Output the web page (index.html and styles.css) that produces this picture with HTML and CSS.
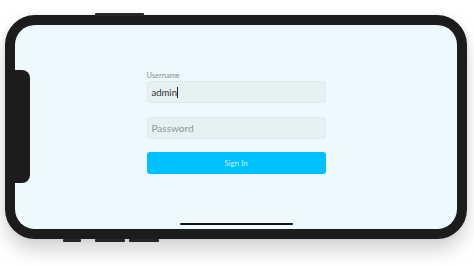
FILE: index.html
```html
<!DOCTYPE html>
<html>
<head>
<meta charset="utf-8">
<link rel="stylesheet" href="styles.css">
</head>
<body>
<div class="stage">
  <div class="phone">
    <span class="btn btn-top"></span>
    <span class="btn btn-b1"></span>
    <span class="btn btn-b2"></span>
    <span class="btn btn-b3"></span>
    <div class="screen">
      <div class="notch"></div>
      <form class="form">
        <label class="label">Username</label>
        <div class="input filled">admin<span class="caret"></span></div>
        <div class="input placeholder">Password</div>
        <div class="signin">Sign In</div>
      </form>
      <div class="home"></div>
    </div>
  </div>
</div>
</body>
</html>
```

FILE: styles.css
```css
* { box-sizing: border-box; }
html, body { margin: 0; padding: 0; background: #ffffff; }
body { width: 474px; height: 265px; overflow: hidden; font-family: Lato, "Open Sans", sans-serif; }
.stage { padding: 15px 0 0 5px; }
.phone {
  position: relative;
  width: 462px;
  height: 224px;
  border: 10px solid #1c1c1c;
  border-radius: 30px;
  background: #1c1c1c;
  box-shadow: 0 12px 18px rgba(0,0,0,0.16), 0 0 6px rgba(0,0,0,0.08);
}
.btn { position: absolute; background: #262626; border-radius: 1px; }
.btn-top { top: -12px; left: 80px; width: 49px; height: 3px; }
.btn-b1 { bottom: -13px; left: 48px; width: 18px; height: 3px; }
.btn-b2 { bottom: -13px; left: 80px; width: 30px; height: 3px; }
.btn-b3 { bottom: -13px; left: 114px; width: 30px; height: 3px; }
.screen {
  position: relative;
  width: 100%;
  height: 100%;
  background: #eef9fe;
  border-radius: 20px;
  display: flex;
  flex-direction: column;
  align-items: center;
  padding-top: 46px;
}
.notch {
  position: absolute;
  left: 0;
  top: 45px;
  width: 15px;
  height: 113px;
  background: #1c1c1c;
  border-radius: 0 8px 8px 0;
}
.form { width: 179px; display: flex; flex-direction: column; }
.label { font-size: 7.5px; color: #7d8f99; line-height: 10px; height: 10px; }
.input {
  height: 22px;
  border-radius: 3px;
  background: #e6f2f1;
  border: 1px solid #dcebea;
  display: flex;
  align-items: center;
  padding-left: 4px;
}
.filled { font-size: 9.5px; color: #2c3438; }
.caret { display: inline-block; width: 1px; height: 11px; background: #222; margin-left: 0.5px; }
.placeholder { margin-top: 14px; font-size: 10px; color: #8398a4; }
.signin {
  margin-top: 13px;
  height: 22px;
  border-radius: 3px;
  background: #00c0fd;
  color: #c9efff;
  font-size: 8px;
  display: flex;
  align-items: center;
  justify-content: center;
}
.home {
  position: absolute;
  left: 165px;
  bottom: 4px;
  width: 113px;
  height: 2.5px;
  border-radius: 2px;
  background: #111;
}
```
